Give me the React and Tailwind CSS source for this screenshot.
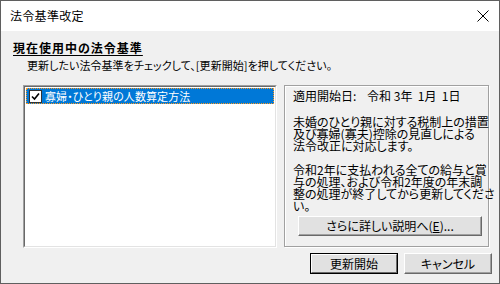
export default function App() {
  const font = "[font-family:'Noto_Sans_CJK_JP','Noto_Sans',sans-serif] [font-feature-settings:'palt']";
  const line = "h-[12px] leading-[12px] shrink-0";
  return (
    <div className={`w-[500px] h-[284px] border border-[#5f5f5f] flex flex-col bg-[#f0f0f0] text-black text-[12px] ${font}`}>
      {/* title bar */}
      <div className="h-[30px] bg-white flex items-center justify-between pl-[9px] pr-[9px] shrink-0">
        <span className="text-[12px] leading-[14px] tracking-[0.3px]">法令基準改定</span>
        <svg width="12" height="12" viewBox="0 0 12 12" className="mr-[1px]">
          <path d="M0.5 0.5 L11.5 11.5 M11.5 0.5 L0.5 11.5" stroke="#000" strokeWidth="1" />
        </svg>
      </div>
      {/* body */}
      <div className="flex-1 flex flex-col pt-[10px] pl-[12px] pr-[7px]">
        <div className="font-bold underline underline-offset-[2px] leading-[14px] tracking-[1px]">現在使用中の法令基準</div>
        <div className="ml-[14px] mt-[3px] leading-[14px] text-[11px] tracking-[0.05px]">更新したい法令基準をチェックして、[更新開始]を押してください。</div>
        <div className="flex mt-[13px] ml-[10px] gap-[7px]">
          {/* list box */}
          <div className="w-[254px] h-[163px] border-t border-l border-[#a0a0a0] border-b border-r border-b-white border-r-white">
            <div className="w-full h-full border-t border-l border-[#696969] border-b border-r border-b-[#e3e3e3] border-r-[#e3e3e3] bg-white p-[1px]">
              <div className="h-[16px] bg-[#0078d7] border border-dotted border-[#ff9a1f] flex items-center pl-[2px] text-white">
                <div className="w-[13px] h-[13px] bg-white border border-[#333] flex items-center justify-center">
                  <svg width="9" height="9" viewBox="0 0 9 9">
                    <path d="M1 4.5 L3.5 7 L8 1.5" stroke="#000" strokeWidth="1.6" fill="none" />
                  </svg>
                </div>
                <span className="ml-[3px] leading-[14px] text-[11px] tracking-[0.1px]">寡婦・ひとり親の人数算定方法</span>
              </div>
            </div>
          </div>
          {/* info panel */}
          <div className="w-[205px] h-[162px] border border-[#a0a0a0] shadow-[1px_1px_0_#ffffff,inset_1px_1px_0_#ffffff] flex flex-col pl-[8px] pt-[3px] pb-[10px]">
            <div className="leading-[14px] whitespace-pre">適用開始日:    令和 3年  1月  1日</div>
            <div className="mt-[13px] whitespace-nowrap flex flex-col">
              <div className={line}>未婚のひとり親に対する税制上の措置</div>
              <div className={line}>及び寡婦(寡夫)控除の見直しによる</div>
              <div className={line}>法令改正に対応します。</div>
              <div className={`${line} mt-[12px]`}>令和2年に支払われる全ての給与と賞</div>
              <div className={line}>与の処理、および令和2年度の年末調</div>
              <div className={line}>整の処理が終了してから更新してくださ</div>
              <div className={line}>い。</div>
            </div>
            <div className="mt-auto w-[184px] h-[20px] ml-[5px] bg-[#e1e1e1] border border-t-white border-l-white border-b-[#696969] border-r-[#696969] shadow-[inset_-1px_-1px_0_#a0a0a0] flex items-center justify-center leading-[14px]">
              さらに詳しい説明へ(<span className="underline">E</span>)...
            </div>
          </div>
        </div>
        <div className="flex justify-end gap-[6px] mt-[5px]">
          <div className="w-[88px] h-[21px] border border-black bg-[#e1e1e1]">
            <div className="w-full h-full border border-t-white border-l-white border-b-[#696969] border-r-[#696969] flex items-center justify-center leading-[14px]">更新開始</div>
          </div>
          <div className="w-[88px] h-[21px] bg-[#e1e1e1] border border-t-white border-l-white border-b-[#696969] border-r-[#696969] shadow-[inset_-1px_-1px_0_#a0a0a0] flex items-center justify-center leading-[14px]">キャンセル</div>
        </div>
      </div>
    </div>
  );
}
